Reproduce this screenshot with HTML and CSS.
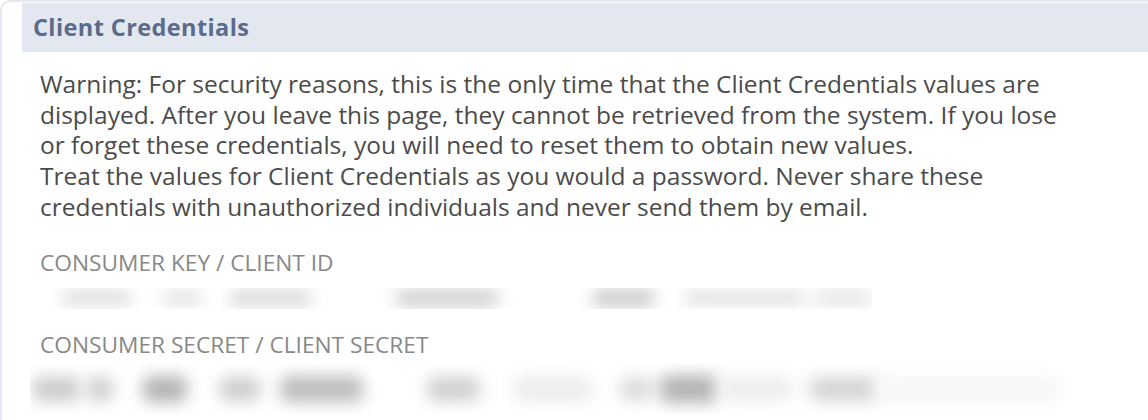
FILE: index.html
```html
<!doctype html>
<html>
  <head>
    <meta charset="UTF-8" />
    <title>Client Credentials</title>
    <link rel="stylesheet" href="styles.css">
  </head>
  <body>
    <div class="panel">
      <div class="panel-head">Client Credentials</div>
      <div class="panel-body">
        <p class="warning">
          Warning: For security reasons, this is the only time that the Client Credentials values are<br />
          displayed. After you leave this page, they cannot be retrieved from the system. If you lose<br />
          or forget these credentials, you will need to reset them to obtain new values.<br />
          Treat the values for Client Credentials as you would a password. Never share these<br />
          credentials with unauthorized individuals and never send them by email.
        </p>
        <div class="field">
          <div class="field-label">Consumer Key / Client ID</div>
          <div class="secret secret-key">
            <span class="blob b1"></span><span class="blob b2"></span><span class="blob b3"></span><span class="blob b4"></span><span class="blob b5"></span><span class="blob b6"></span><span class="blob b7"></span>
          </div>
        </div>
        <div class="field field-second">
          <div class="field-label">Consumer Secret / Client Secret</div>
          <div class="secret secret-value">
            <span class="blob c1"></span><span class="blob c2"></span><span class="blob c3"></span><span class="blob c4"></span><span class="blob c5"></span><span class="blob c6"></span><span class="blob c7"></span><span class="blob c8"></span><span class="blob c9"></span><span class="blob c10"></span><span class="blob c11"></span><span class="blob c12"></span>
          </div>
        </div>
      </div>
    </div>
  </body>
</html>
```

FILE: styles.css
```css
body {
  font-family: "Open Sans", "Noto Sans", Arial, sans-serif;
  margin: 0;
  background: #fff;
  overflow: hidden;
  -webkit-font-smoothing: antialiased;
}
.panel {
  border: 2px solid #e4e9f1;
  border-right: none;
  border-bottom: none;
  border-radius: 10px 0 0 0;
  padding: 1px 0 0 20px;
  height: 420px;
  box-sizing: border-box;
}
.panel-head {
  background: #e2e7f0;
  color: #5b6b8b;
  font-weight: 700;
  font-size: 23.5px;
  letter-spacing: 0.4px;
  height: 49px;
  line-height: 48px;
  padding-left: 11px;
}
.panel-body {
  padding: 17px 0 0 18px;
}
.warning {
  margin: 0;
  color: #4b4b4b;
  font-size: 24.5px;
  line-height: 30.7px;
  white-space: nowrap;
}
.field {
  margin-top: 27px;
}
.field-second {
  margin-top: 23px;
}
.field-label {
  text-transform: uppercase;
  color: #888;
  font-size: 22.7px;
  line-height: 26px;
}
.secret {
  overflow: hidden;
  display: flex;
  align-items: center;
}
.secret-key {
  height: 21px;
  width: 820px;
  margin-top: 12px;
  margin-left: 12px;
}
.secret-value {
  height: 50px;
  width: 1070px;
  margin-top: 6px;
  margin-left: -10px;
}
.blob {
  display: block;
  height: 16px;
  border-radius: 8px;
  filter: blur(8px);
  flex: none;
}
.b1 { width: 70px; margin-left: 10px; background: #dedede; }
.b2 { width: 40px; margin-left: 30px; background: #e4e4e4; }
.b3 { width: 83px; margin-left: 27px; background: #d8d8d8; }
.b4 { width: 104px; margin-left: 83px; background: #cdcdcd; }
.b5 { width: 63px; margin-left: 93px; background: #c6c6c6; }
.b6 { width: 120px; margin-left: 30px; background: #e2e2e2; }
.b7 { width: 60px; margin-left: 7px; background: #e6e6e6; }
.blob.c1 { width: 47px; height: 24px; margin-left: 3px; background: #cacaca; }
.blob.c2 { width: 26px; height: 24px; margin-left: 7px; background: #cdcdcd; }
.blob.c3 { width: 44px; height: 26px; margin-left: 30px; background: #b3b3b3; }
.blob.c4 { width: 40px; height: 24px; margin-left: 33px; background: #cdcdcd; }
.blob.c5 { width: 83px; height: 26px; margin-left: 20px; background: #bcbcbc; }
.blob.c6 { width: 53px; height: 24px; margin-left: 64px; background: #cfcfcf; }
.blob.c7 { width: 80px; height: 24px; margin-left: 33px; background: #ececec; }
.blob.c8 { width: 33px; height: 24px; margin-left: 27px; background: #dcdcdc; }
.blob.c9 { width: 57px; height: 28px; margin-left: 7px; background: #b4b4b4; }
.blob.c10 { width: 73px; height: 24px; margin-left: 3px; background: #eeeeee; }
.blob.c11 { width: 67px; height: 24px; margin-left: 17px; background: #d4d4d4; }
.blob.c12 { width: 183px; height: 24px; margin-left: 0; background: #f6f6f6; }
```
